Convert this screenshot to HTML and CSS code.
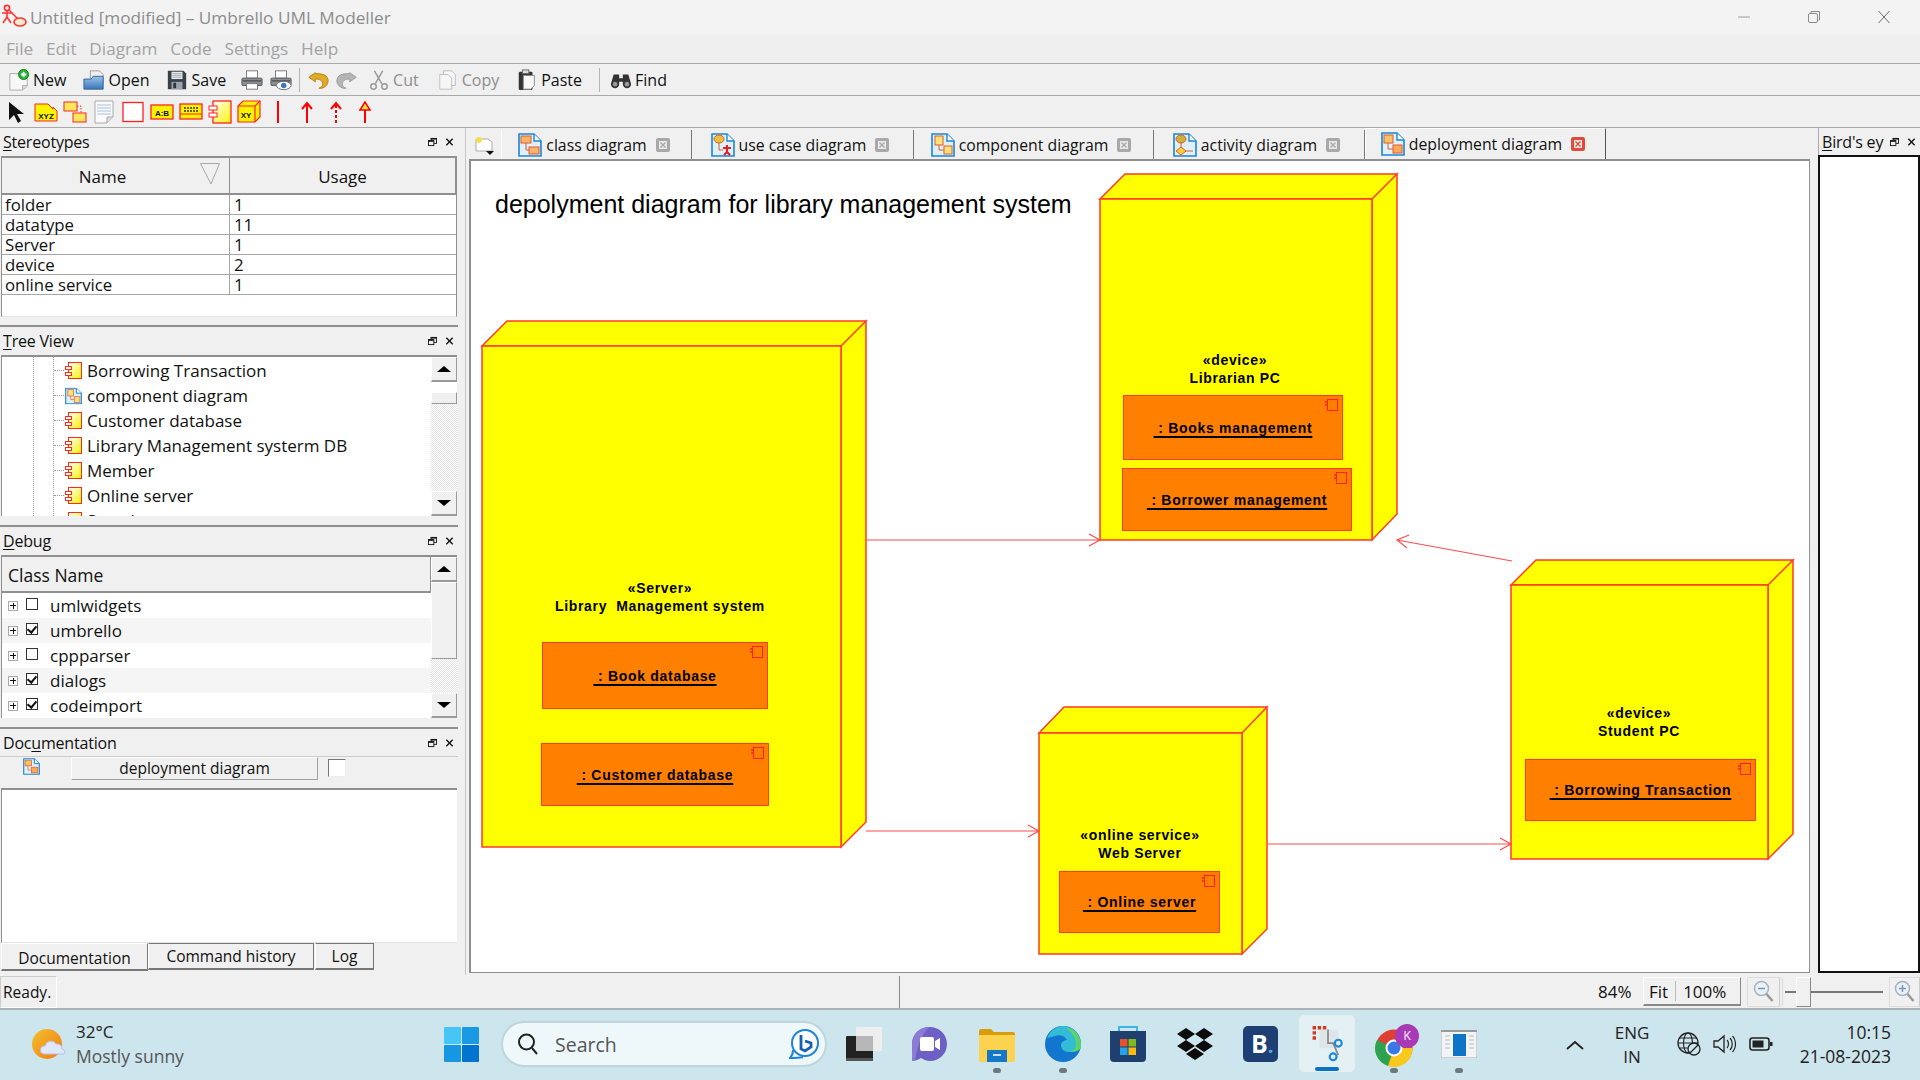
FILE: index.html
```html
<!DOCTYPE html>
<html lang="en">
<head>
<meta charset="utf-8">
<title>Untitled [modified] – Umbrello UML Modeller</title>
<link rel="stylesheet" href="styles.css">
</head>
<body>
<svg class="defs" width="0" height="0" aria-hidden="true">
  <defs>
    <linearGradient id="gy" x1="0" y1="0" x2="1" y2="1"><stop offset="0" stop-color="#ffffff"/><stop offset="1" stop-color="#fff200"/></linearGradient>
    <linearGradient id="gb" x1="0" y1="0" x2="0" y2="1"><stop offset="0" stop-color="#9cc3ea"/><stop offset="1" stop-color="#3b76b8"/></linearGradient>
    <linearGradient id="gs" x1="0" y1="0" x2="1" y2="1"><stop offset="0" stop-color="#f2c12f"/><stop offset="1" stop-color="#f47a12"/></linearGradient>
    <symbol id="i-comp" viewBox="0 0 17 18">
      <rect x="3.5" y=".5" width="13" height="16" fill="url(#gy)" stroke="#ff2a1a"/>
      <rect x=".5" y="4.5" width="6" height="3" fill="#fff" stroke="#ff2a1a"/>
      <rect x=".5" y="10.5" width="6" height="3" fill="#fff" stroke="#ff2a1a"/>
    </symbol>
    <symbol id="i-doc" viewBox="0 0 24 24">
      <path d="M1 1H16L23 8V23H1Z" fill="#dff0fb" stroke="#1b86d8" stroke-width="1.6"/>
      <path d="M16 1V8H23" fill="#fff" stroke="#1b86d8" stroke-width="1.4"/>
    </symbol>
    <symbol id="i-class" viewBox="0 0 24 24">
      <use href="#i-doc"/>
      <rect x="3" y="3" width="10" height="7" fill="#f9b36b" stroke="#e25a2a"/>
      <rect x="11" y="14" width="10" height="7" fill="#f9b36b" stroke="#e25a2a"/>
      <path d="M8 10V17H11" fill="none" stroke="#e25a2a"/>
    </symbol>
    <symbol id="i-usecase" viewBox="0 0 24 24">
      <use href="#i-doc"/>
      <ellipse cx="8" cy="6" rx="5" ry="4" fill="#e8c33d" stroke="#e25a2a"/>
      <path d="M8 10V17H12" fill="none" stroke="#e25a2a"/>
      <path d="M16 12v8M12 15h8M16 19l-3 3M16 19l3 3" stroke="#e0202a" stroke-width="2.2" fill="none"/>
    </symbol>
    <symbol id="i-compd" viewBox="0 0 24 24">
      <use href="#i-doc"/>
      <rect x="4" y="3" width="8" height="9" fill="#fce27a" stroke="#e25a2a"/>
      <rect x="13" y="13" width="8" height="8" fill="#fce27a" stroke="#e25a2a"/>
      <path d="M8 12V17H13" fill="none" stroke="#e25a2a"/>
    </symbol>
    <symbol id="i-act" viewBox="0 0 24 24">
      <use href="#i-doc"/>
      <ellipse cx="8" cy="6" rx="5" ry="4" fill="#c9b13a" stroke="#e25a2a"/>
      <path d="M8 10V16" fill="none" stroke="#e25a2a"/>
      <path d="M8 14l5 4-5 4-5-4Z" fill="#ffd23a" stroke="#e25a2a"/>
      <path d="M13 18H20" stroke="#e25a2a"/>
    </symbol>
    <symbol id="i-dep" viewBox="0 0 24 24">
      <use href="#i-doc"/>
      <rect x="3" y="3" width="9" height="8" fill="#f3c46a" stroke="#e25a2a"/>
      <rect x="12" y="13" width="9" height="8" fill="#f8a95a" stroke="#e25a2a"/>
      <path d="M7 11V17H12" fill="none" stroke="#e25a2a"/>
    </symbol>
    <symbol id="i-float" viewBox="0 0 10 10">
      <rect x="3.5" y="1" width="6" height="5.5" fill="none" stroke="#111"/><path d="M3 1.5h6.5" stroke="#111" stroke-width="1.6"/>
      <rect x=".5" y="3.5" width="6" height="5.5" fill="#f0f0f0" stroke="#111"/><path d="M0 4h6.5" stroke="#111" stroke-width="1.6"/>
    </symbol>
    <symbol id="i-close" viewBox="0 0 10 10"><path d="M1.5 1.5 8.5 8.5M8.5 1.5 1.5 8.5" stroke="#111" stroke-width="1.5"/></symbol>
    <symbol id="i-tabx" viewBox="0 0 14 14"><rect width="14" height="14" rx="2" fill="#a9a9a9"/><rect x="3" y="3" width="8" height="8" fill="#e9e9e9"/><path d="M4.5 4.5l5 5M9.5 4.5l-5 5" stroke="#a9a9a9" stroke-width="1.3"/></symbol>
    <symbol id="i-cmp" viewBox="0 0 13 13"><rect x="2.500" y=".5" width="10" height="11" fill="none" stroke="#ff2020"/><path d="M0 3h3M0 6h3" stroke="#ff2020" stroke-width="1.500"/></symbol>
  </defs>
</svg>

<div class="app">
  <header class="titlebar">
    <svg class="logo" viewBox="0 0 26 26"><circle cx="6" cy="4" r="2.6" fill="none" stroke="#f33" stroke-width="1.6"/><path d="M1 9h10M6 7v6M6 13l-4 6M6 13l4 6M8 6l8 8" stroke="#f33" stroke-width="1.6" fill="none"/><ellipse cx="19" cy="18" rx="6" ry="4" fill="#fbe9d0" stroke="#f33" stroke-width="1.6"/></svg>
    <span class="title-text">Untitled [modified] – Umbrello UML Modeller</span>
    <div class="winctl">
      <svg class="wc" viewBox="0 0 12 14"><path d="M0 7h12" stroke="#9a9a9a"/></svg>
      <svg class="wc" viewBox="0 0 12 14"><rect x=".5" y="3.500" width="9" height="9" rx="1.5" fill="none" stroke="#8a8a8a"/><path d="M3 3V1.500h8.500v8.500h-1" fill="none" stroke="#8a8a8a"/></svg>
      <svg class="wc" viewBox="0 0 12 14"><path d="M.5 1l11 12M11.5 1l-11 12" stroke="#6a6a6a"/></svg>
    </div>
  </header>

  <nav class="menubar">
    <span>File</span><span>Edit</span><span>Diagram</span><span>Code</span><span>Settings</span><span>Help</span>
  </nav>

  <div class="toolbar tb-main">
    <div class="tool wide"><svg class="ti" viewBox="0 0 24 24"><path d="M2 5h14l5 5v9l-5 4H2Z" fill="#f7f7f7" stroke="#aaa"/><path d="M16 23v-5h5" fill="#ddd" stroke="#aaa"/><circle cx="17" cy="6" r="5.5" fill="#1fb32e" stroke="#0a7a18"/><path d="M17 3v6M14 6h6" stroke="#fff" stroke-width="2"/></svg><span>New</span></div>
    <div class="tool wide"><svg class="ti" viewBox="0 0 24 24"><path d="M8 2h10l4 4v10H8Z" fill="#eee" stroke="#999"/><path d="M1 11h8l2-3h11v14H1Z" fill="url(#gb)" stroke="#2d6299"/></svg><span>Open</span></div>
    <div class="tool save"><svg class="ti" viewBox="0 0 24 24"><path d="M2 2h17l3 3v17H2Z" fill="#3a4048"/><rect x="6" y="3" width="12" height="8" fill="#e8eef4"/><path d="M7 5h10M7 7h10M7 9h10" stroke="#9aa"/><rect x="6" y="14" width="12" height="8" fill="#9aa2ab"/><rect x="8" y="15" width="3" height="6" fill="#333"/></svg><span>Save</span></div>
    <div class="tool"><svg class="ti" viewBox="0 0 24 24"><rect x="6" y="2" width="12" height="8" fill="#fff" stroke="#777"/><rect x="1" y="10" width="22" height="8" rx="1" fill="#8b8f94" stroke="#555"/><path d="M2 13h20" stroke="#333"/><rect x="6" y="16" width="12" height="6" fill="#fff" stroke="#777"/></svg></div>
    <div class="tool"><svg class="ti" viewBox="0 0 24 24"><rect x="6" y="2" width="12" height="8" fill="#fff" stroke="#777"/><rect x="1" y="10" width="22" height="8" rx="1" fill="#8b8f94" stroke="#555"/><path d="M2 13h20" stroke="#333"/><ellipse cx="15" cy="18" rx="8" ry="4.5" fill="#fff" stroke="#667"/><circle cx="15" cy="18" r="3" fill="#3b78c0"/></svg></div>
    <i class="tsep"></i>
    <div class="tool"><svg class="ti" viewBox="0 0 24 24"><path d="M9 4 2 9l7 5v-3c6 0 8 2 8 6 0 2-2 3-4 4h3c4-1 7-4 7-8 0-6-5-8-14-8Z" fill="#e0aa28" stroke="#b47f10"/></svg></div>
    <div class="tool"><svg class="ti flip" viewBox="0 0 24 24"><path d="M9 4 2 9l7 5v-3c6 0 8 2 8 6 0 2-2 3-4 4h3c4-1 7-4 7-8 0-6-5-8-14-8Z" fill="#b5b5b5" stroke="#999"/></svg></div>
    <div class="tool dim cut"><svg class="ti" viewBox="0 0 24 24"><path d="M7 2l8 14M16 2 8 16" stroke="#999" stroke-width="1.6"/><circle cx="6" cy="19" r="3" fill="none" stroke="#999" stroke-width="1.6"/><circle cx="18" cy="19" r="3" fill="none" stroke="#999" stroke-width="1.6"/></svg><span>Cut</span></div>
    <div class="tool dim wide"><svg class="ti" viewBox="0 0 24 24"><path d="M7 2h9l4 4v12H7Z" fill="#f6f6f6" stroke="#bbb"/><path d="M3 6h9l4 4v12H3Z" fill="#f6f6f6" stroke="#bbb"/></svg><span>Copy</span></div>
    <div class="tool wide"><svg class="ti" viewBox="0 0 24 24"><rect x="3" y="3" width="15" height="20" rx="1.5" fill="#333"/><rect x="7" y="1" width="7" height="4" fill="#ddd" stroke="#666"/><path d="M8 7h12v11l-4 4H8Z" fill="#f8f8f8" stroke="#888"/></svg><span>Paste</span></div>
    <i class="tsep"></i>
    <div class="tool gapl"><svg class="ti" viewBox="0 0 24 24"><path d="M4 6h6v4h4V6h6l3 10a4.500 4.500 0 0 1-9 1v-3h-4v3a4.500 4.500 0 0 1-9-1Z" fill="#333"/><circle cx="5.500" cy="16.500" r="2.500" fill="#999"/><circle cx="18.500" cy="16.500" r="2.500" fill="#999"/></svg><span>Find</span></div>
  </div>

  <div class="toolbar tb-shapes">
    <div class="cell"><svg class="si" viewBox="0 0 24 24"><path d="M4 2v18l5-5 4 8 3-2-4-7h7Z" fill="#111"/></svg></div>
    <div class="cell"><svg class="si" viewBox="0 0 24 24"><path d="M1 4h13l5 5v-2l4 4v10H1Z" fill="#fff200" stroke="#f22"/><text class="ic-t" x="12" y="19" text-anchor="middle">XYZ</text></svg></div>
    <div class="cell"><svg class="si" viewBox="0 0 24 24"><rect x="1" y="2" width="13" height="9" fill="#ffe65c" stroke="#f22"/><rect x="10" y="13" width="13" height="9" fill="#ffe65c" stroke="#f22"/><path d="M14 6h4v7" stroke="#f22" fill="none" stroke-dasharray="1.500 1.500"/></svg></div>
    <div class="cell"><svg class="si" viewBox="0 0 24 24"><path d="M3 1h18v16l-6 6H3Z" fill="#fafafa" stroke="#aaa"/><path d="M5 5h14M5 8h14M5 11h14M5 14h14" stroke="#a9bfe0"/><path d="M15 23v-6h6" fill="#ddd" stroke="#aaa"/></svg></div>
    <div class="cell"><svg class="si" viewBox="0 0 24 24"><rect x="2" y="2.500" width="20" height="19" fill="#fff" stroke="#f22" stroke-width="1.300"/></svg></div>
    <div class="cell"><svg class="si" viewBox="0 0 24 24"><rect x="1" y="5" width="22" height="14" fill="#fff200" stroke="#f22" stroke-width="1.300"/><text class="ic-t" x="12" y="15.500" text-anchor="middle">A:B</text></svg></div>
    <div class="cell"><svg class="si" viewBox="0 0 24 24"><rect x="1" y="4" width="22" height="15" fill="#fff200" stroke="#f22" stroke-width="1.300"/><path d="M1 14h22" stroke="#f22"/><path d="M5 8h14M5 11h14" stroke="#333" stroke-width="1.500" stroke-dasharray="2 1"/></svg></div>
    <div class="cell"><svg class="si" viewBox="0 0 24 24"><rect x="5" y="1" width="18" height="22" fill="url(#gy)" stroke="#f22" stroke-width="1.300"/><rect x="1" y="6" width="8" height="4" fill="#fff" stroke="#f22"/><rect x="1" y="13" width="8" height="4" fill="#fff" stroke="#f22"/></svg></div>
    <div class="cell"><svg class="si" viewBox="0 0 24 24"><path d="M1 6l5-5h17v16l-5 5H1Z" fill="#fff200" stroke="#f22" stroke-width="1.200"/><path d="M1 6h17v16M18 6l5-5" fill="none" stroke="#f22" stroke-width="1.200"/><text class="ic-t" x="9" y="18" text-anchor="middle">XY</text></svg></div>
    <div class="cell"><svg class="si" viewBox="0 0 24 24"><path d="M12 1v22" stroke="#f00" stroke-width="2"/></svg></div>
    <div class="cell"><svg class="si" viewBox="0 0 24 24"><path d="M12 23V3M7 9l5-6 5 6" stroke="#f00" stroke-width="2" fill="none"/></svg></div>
    <div class="cell"><svg class="si" viewBox="0 0 24 24"><path d="M12 23V3" stroke="#f00" stroke-width="2" stroke-dasharray="3 2"/><path d="M7 9l5-6 5 6" stroke="#f00" stroke-width="2" fill="none"/></svg></div>
    <div class="cell"><svg class="si" viewBox="0 0 24 24"><path d="M12 23V8" stroke="#f00" stroke-width="2"/><path d="M12 2 7 10h10Z" fill="#ffe14a" stroke="#f00" stroke-width="1.500"/></svg></div>
  </div>

  <main class="workspace">
    <aside class="leftdock">
      <section class="dock d-stereo">
        <div class="dock-title"><span><u>S</u>tereotypes</span><svg class="dk"><use href="#i-float"/></svg><svg class="dk"><use href="#i-close"/></svg></div>
        <div class="stereo-body">
          <div class="stereo-head"><div class="sh sh1">Name<svg class="sort" viewBox="0 0 20 22"><path d="M.5.5h19L11 21Z" fill="none" stroke="#a8a8a8"/></svg></div><div class="sh">Usage</div></div>
          <div class="srow"><span>folder</span><span>1</span></div>
          <div class="srow"><span>datatype</span><span>11</span></div>
          <div class="srow"><span>Server</span><span>1</span></div>
          <div class="srow"><span>device</span><span>2</span></div>
          <div class="srow"><span>online service</span><span>1</span></div>
        </div>
      </section>
      <section class="dock d-tree">
        <div class="dock-title"><span><u>T</u>ree View</span><svg class="dk"><use href="#i-float"/></svg><svg class="dk"><use href="#i-close"/></svg></div>
        <div class="tree-body">
          <div class="tree-list">
            <div class="trow"><svg class="tic"><use href="#i-comp"/></svg><span>Borrowing Transaction</span></div>
            <div class="trow"><svg class="tic"><use href="#i-compd"/></svg><span>component diagram</span></div>
            <div class="trow"><svg class="tic"><use href="#i-comp"/></svg><span>Customer database</span></div>
            <div class="trow"><svg class="tic"><use href="#i-comp"/></svg><span>Library Management systerm DB</span></div>
            <div class="trow"><svg class="tic"><use href="#i-comp"/></svg><span>Member</span></div>
            <div class="trow"><svg class="tic"><use href="#i-comp"/></svg><span>Online server</span></div>
            <div class="trow"><svg class="tic"><use href="#i-comp"/></svg><span>Search</span></div>
          </div>
          <div class="sbar sb-tree">
            <div class="sbtn"><i class="up"></i></div>
            <div class="sthumb t-tree"></div>
            <div class="strough"></div>
            <div class="sbtn"><i class="down"></i></div>
          </div>
        </div>
      </section>
      <section class="dock d-debug">
        <div class="dock-title"><span><u>D</u>ebug</span><svg class="dk"><use href="#i-float"/></svg><svg class="dk"><use href="#i-close"/></svg></div>
        <div class="debug-body">
          <div class="debug-list">
            <div class="dhead">Class Name</div>
            <div class="drow"><i class="exp"></i><i class="chk"></i><span>umlwidgets</span></div>
            <div class="drow alt"><i class="exp"></i><i class="chk on"></i><span>umbrello</span></div>
            <div class="drow"><i class="exp"></i><i class="chk"></i><span>cppparser</span></div>
            <div class="drow alt"><i class="exp"></i><i class="chk on"></i><span>dialogs</span></div>
            <div class="drow"><i class="exp"></i><i class="chk on"></i><span>codeimport</span></div>
          </div>
          <div class="sbar sb-debug">
            <div class="sbtn"><i class="up"></i></div>
            <div class="sthumb t-debug"></div>
            <div class="strough"></div>
            <div class="sbtn"><i class="down"></i></div>
          </div>
        </div>
      </section>
      <section class="dock d-doc">
        <div class="dock-title"><span>Doc<u>u</u>mentation</span><svg class="dk"><use href="#i-float"/></svg><svg class="dk"><use href="#i-close"/></svg></div>
        <div class="doc-row"><svg class="doc-ic"><use href="#i-dep"/></svg><div class="doc-name">deployment diagram</div><i class="doc-chk"></i></div>
        <div class="doc-area"></div>
        <div class="doc-tabs"><div class="dtab active">Documentation</div><div class="dtab t2">Command history</div><div class="dtab t3">Log</div></div>
      </section>
    </aside>

    <section class="center">
      <div class="tabbar">
        <div class="corner"><svg viewBox="0 0 22 20" class="corner-ic"><path d="M2 3h12l4 3v9H2Z" fill="#fff" stroke="#aaa"/><circle cx="5" cy="4" r="3" fill="#f6e04b"/><path d="M12 15h8l-4 4Z" fill="#111"/></svg></div>
        <div class="tab w1"><svg class="tab-ic"><use href="#i-class"/></svg><span>class diagram</span><svg class="tab-x"><use href="#i-tabx"/></svg></div>
        <div class="tab w2"><svg class="tab-ic"><use href="#i-usecase"/></svg><span>use case diagram</span><svg class="tab-x"><use href="#i-tabx"/></svg></div>
        <div class="tab w3"><svg class="tab-ic"><use href="#i-compd"/></svg><span>component diagram</span><svg class="tab-x"><use href="#i-tabx"/></svg></div>
        <div class="tab w4"><svg class="tab-ic"><use href="#i-act"/></svg><span>activity diagram</span><svg class="tab-x"><use href="#i-tabx"/></svg></div>
        <div class="tab w5 current"><svg class="tab-ic"><use href="#i-dep"/></svg><span>deployment diagram</span><svg class="tab-x red" viewBox="0 0 14 14"><rect width="14" height="14" rx="2" fill="#e04a3c"/><rect x="3" y="3" width="8" height="8" fill="#fbe6e2"/><path d="M4.500 4.500l5 5M9.500 4.500l-5 5" stroke="#e04a3c" stroke-width="1.300"/></svg></div>
      </div>
      <div class="canvas">
        <svg class="wires" viewBox="471 161 1337 809">
          <g class="box">
            <path d="M482 346 507 321H866L841 346ZM841 346 866 321V822L841 847Z"/><rect x="482" y="346" width="359" height="501"/>
            <path d="M1100 199 1125 174H1397L1372 199ZM1372 199 1397 174V514L1372 540Z"/><rect x="1100" y="199" width="272" height="341"/>
            <path d="M1039 733 1064 707H1267L1242 733ZM1242 733 1267 707V929L1242 954Z"/><rect x="1039" y="733" width="203" height="221"/>
            <path d="M1511 585 1536 560H1793L1768 585ZM1768 585 1793 560V834L1768 859Z"/><rect x="1511" y="585" width="257" height="274"/>
          </g>
          <g class="link">
            <path d="M866 540H1100M1089 534 1100 540 1089 546"/>
            <path d="M866 831H1039M1028 825 1039 831 1028 837"/>
            <path d="M1267 844H1511M1500 838 1511 844 1500 850"/>
            <path d="M1512 561 1397 540M1409 535 1397 540 1407 548"/>
          </g>
        </svg>
        <div class="diagram-title">depolyment diagram for library management system</div>

        <div class="nlabel l-server">«Server»<br>Library&nbsp; Management system</div>
        <div class="nlabel l-librarian">«device»<br>Librarian PC</div>
        <div class="nlabel l-web">«online service»<br>Web Server</div>
        <div class="nlabel l-student">«device»<br>Student PC</div>

        <div class="cmp c-book"><u> : Book database</u><svg class="cmp-ic"><use href="#i-cmp"/></svg></div>
        <div class="cmp c-cust"><u> : Customer database</u><svg class="cmp-ic"><use href="#i-cmp"/></svg></div>
        <div class="cmp c-books"><u> : Books management</u><svg class="cmp-ic"><use href="#i-cmp"/></svg></div>
        <div class="cmp c-borrower"><u> : Borrower management</u><svg class="cmp-ic"><use href="#i-cmp"/></svg></div>
        <div class="cmp c-online"><u> : Online server</u><svg class="cmp-ic"><use href="#i-cmp"/></svg></div>
        <div class="cmp c-trans"><u> : Borrowing Transaction</u><svg class="cmp-ic"><use href="#i-cmp"/></svg></div>
      </div>
    </section>

    <aside class="rightdock">
      <div class="dock-title rt"><span><u>B</u>ird's ey</span><svg class="dk"><use href="#i-float"/></svg><svg class="dk"><use href="#i-close"/></svg></div>
      <div class="birdview"></div>
    </aside>
  </main>

  <footer class="statusbar">
    <div class="st-ready">Ready.</div>
    <div class="st-msg"></div>
    <div class="st-pct">84%</div>
    <div class="st-btns"><span>Fit</span><i></i><span>100%</span></div>
    <div class="st-z zo"><svg viewBox="0 0 24 26" class="zic"><circle cx="9.500" cy="9.500" r="7" fill="#e9f1f8" stroke="#a5b2bd" stroke-width="1.500"/><path d="M6 9.500h7" stroke="#7b98b4" stroke-width="1.500"/><path d="M14.500 15l6 7" stroke="#999" stroke-width="2.500"/></svg></div>
    <div class="st-slider"><i class="st-track"></i><i class="st-thumb"></i></div>
    <div class="st-z zi"><svg viewBox="0 0 24 26" class="zic"><circle cx="9.500" cy="9.500" r="7" fill="#e9f1f8" stroke="#a5b2bd" stroke-width="1.500"/><path d="M6 9.500h7M9.500 6v7" stroke="#7b98b4" stroke-width="1.500"/><path d="M14.500 15l6 7" stroke="#999" stroke-width="2.500"/></svg></div>
  </footer>

  <div class="taskbar">
    <div class="weather">
      <svg class="w-ic" viewBox="0 0 34 32"><circle cx="15" cy="16" r="15" fill="url(#gs)"/><path d="M12 26a4 4 0 0 1 1-8 6 6 0 0 1 11-2 5 5 0 0 1 6 5 3 3 0 0 1 2 5Z" fill="#dfe8fb" stroke="#b4c3ea"/></svg>
      <div class="w-txt"><div class="w-t">32°C</div><div class="w-d">Mostly sunny</div></div>
    </div>
    <div class="task-mid">
      <svg class="start" viewBox="0 0 35 35"><rect width="17" height="17" rx="1" fill="#46c5f7"/><rect x="18" width="17" height="17" rx="1" fill="#1b9ae4"/><rect y="18" width="17" height="17" rx="1" fill="#1796e2"/><rect x="18" y="18" width="17" height="17" rx="1" fill="#0274d0"/></svg>
      <div class="searchbox">
        <svg class="s-ic" viewBox="0 0 24 24"><circle cx="10.500" cy="10" r="7.500" fill="none" stroke="#222" stroke-width="2"/><path d="M16 16l5 6" stroke="#222" stroke-width="2"/></svg>
        <span>Search</span>
        <svg class="bing" viewBox="0 0 30 32"><circle cx="16" cy="15" r="13" fill="#fff" stroke="#1f83d8" stroke-width="2"/><path d="M4 22c0 4-1 6-3 8 4 0 9 0 13-1" fill="none" stroke="#1f83d8" stroke-width="2"/><path d="M12 7v14l4 2 6-4v-4l-6-2" fill="none" stroke="#1260b8" stroke-width="2.800"/></svg>
      </div>
      <svg class="tk t-view" viewBox="0 0 36 34"><rect y="9" width="27" height="25" rx="1" fill="#222"/><rect y="31" width="27" height="3" fill="#555"/><rect x="10" width="26" height="24" rx="1" fill="#eee"/><rect x="10" y="9" width="17" height="15" fill="#b7b7b7"/></svg>
      <svg class="tk t-teams" viewBox="0 0 35 34"><path d="M17.500 0C8 0 0 7 0 17c0 6 1 12 0 17 3 0 7-2 9-3 3 2 6 3 9 3 9 0 17-7 17-17S27 0 17.500 0Z" fill="#6e5fc4"/><path d="M0 17C0 7 8 0 17.500 0 12 5 6 14 3 34H0c1-5 0-11 0-17Z" fill="#8b7bd6"/><rect x="8" y="10" width="14" height="14" rx="2" fill="#fff"/><path d="M23 14l5-3v12l-5-3Z" fill="#fff"/></svg>
      <svg class="tk t-files" viewBox="0 0 36 34"><path d="M0 3a2 2 0 0 1 2-2h10l3 3h19a2 2 0 0 1 2 2v4H0Z" fill="#d89c0c"/><path d="M0 7h36v25a2 2 0 0 1-2 2H2a2 2 0 0 1-2-2Z" fill="#fcd24f"/><rect x="8" y="22" width="20" height="12" fill="#1477c8"/><rect x="14" y="26" width="8" height="2" fill="#cde"/></svg>
      <svg class="tk t-edge" viewBox="0 0 36 36"><circle cx="18" cy="18" r="18" fill="#1276cf"/><path d="M2 12C6 3 13 0 18 0c10 0 18 8 18 20 0 5-7 6-12 6-7 0-8-5-8-7 0-3 4-5 6-5-2-4-8-6-12-4-4 1-8 2-10 2Z" fill="#32bcd8"/><path d="M20 2c10 0 16 8 16 18 0 5-7 6-12 6 6-1 7-6 7-8 0-5-5-14-11-16Z" fill="#5bd46a"/></svg>
      <svg class="tk t-store" viewBox="0 0 36 36"><path d="M9 5V1h18v4" fill="none" stroke="#36b6ea" stroke-width="2"/><path d="M0 5h36v27a4 4 0 0 1-4 4H4a4 4 0 0 1-4-4Z" fill="#1f3f6f"/><rect x="10" y="13" width="7.500" height="7.500" fill="#e8522a"/><rect x="18.500" y="13" width="7.500" height="7.500" fill="#7fb81f"/><rect x="10" y="21.500" width="7.500" height="7.500" fill="#25a5e8"/><rect x="18.500" y="21.500" width="7.500" height="7.500" fill="#fdb90f"/></svg>
      <svg class="tk t-drop" viewBox="0 0 36 34"><path d="M9 0l9 6-9 6-9-6ZM27 0l9 6-9 6-9-6ZM9 12l9 6-9 6-9-6ZM27 12l9 6-9 6-9-6ZM18 20l9 6-9 6-9-6Z" fill="#0c0c0c"/></svg>
      <div class="booking">B<em>.</em></div>
      <div class="snip">
        <svg class="snip-ic" viewBox="0 0 36 42"><rect x="8" y="4" width="22" height="22" fill="#dfe5e8"/><path d="M2 16V2h16" fill="none" stroke="#d9381e" stroke-width="4" stroke-dasharray="4 2"/><path d="M18 4v16h6l6 14" fill="none" stroke="#888" stroke-width="2"/><circle cx="30" cy="20" r="4" fill="none" stroke="#1b88d8" stroke-width="2.500"/><circle cx="24" cy="36" r="4" fill="none" stroke="#1b88d8" stroke-width="2.500"/></svg>
        <i class="active-line"></i>
      </div>
      <div class="chrome">
        <svg class="chrome-ic" viewBox="0 0 38 38"><circle cx="19" cy="19" r="18.500" fill="#dd4133"/><path d="M19 19 2 11A18.500 18.500 0 0 0 13 37Z" fill="#2ea34f"/><path d="M19 19h18.500A18.500 18.500 0 0 1 13 37Z" fill="#f8c81c"/><circle cx="19" cy="19" r="8.500" fill="#fff"/><circle cx="19" cy="19" r="6.500" fill="#3a78e8"/></svg>
        <span class="badge">K</span>
      </div>
      <svg class="tk t-app" viewBox="0 0 36 28"><rect width="36" height="28" fill="#f2f4f6" stroke="#aaa"/><rect width="36" height="2" fill="#999"/><rect x="12" y="4" width="13" height="22" fill="#0d74c8"/><path d="M4 6h5M4 10h5M4 14h5M4 18h5M28 6h5M28 10h5M28 14h5M28 18h5" stroke="#bbb"/></svg>
      <i class="rdot d1"></i><i class="rdot d2"></i><i class="rdot d3"></i><i class="rdot d4"></i>
    </div>
    <div class="tray">
      <svg class="chev" viewBox="0 0 18 10"><path d="M1 9l8-7 8 7" fill="none" stroke="#222" stroke-width="1.800"/></svg>
      <div class="lang">ENG<br>IN</div>
      <svg class="ty" viewBox="0 0 24 24"><circle cx="11" cy="11" r="10" fill="none" stroke="#222" stroke-width="1.300"/><ellipse cx="11" cy="11" rx="4.500" ry="10" fill="none" stroke="#222" stroke-width="1.100"/><path d="M1 11h20M2.500 6h17M2.500 16h10" stroke="#222"/><circle cx="17" cy="17" r="6" fill="#cde5ec" stroke="#222" stroke-width="1.300"/><path d="M13 21l8-8" stroke="#222" stroke-width="1.300"/></svg>
      <svg class="ty" viewBox="0 0 24 24"><path d="M2 9v6h4l6 5V4L6 9Z" fill="none" stroke="#222" stroke-width="1.300"/><path d="M15 8c2 2 2 6 0 8M18 6c3 3 3 9 0 12M20.500 4c4 4 4 12 0 16" fill="none" stroke="#222" stroke-width="1.200"/></svg>
      <svg class="ty bat" viewBox="0 0 24 24"><rect x="1" y="6" width="19" height="12" rx="2.500" fill="none" stroke="#222" stroke-width="1.600"/><rect x="3.500" y="8.500" width="11" height="7" fill="#222"/><rect x="21" y="10" width="2.500" height="4" fill="#222"/></svg>
      <div class="clock"><div>10:15</div><div>21-08-2023</div></div>
    </div>
  </div>
</div>
</body>
</html>
```

FILE: styles.css
```css
* { box-sizing: border-box; }
html, body { margin: 0; padding: 0; height: 100%; overflow: hidden; }
body { font-family: "Open Sans", "Noto Sans", sans-serif; font-size: 16px; color: #111; background: #f0f0f0; }
.defs { position: absolute; }
u { text-underline-offset: 2px; }
.app { width: 1920px; height: 1080px; display: flex; flex-direction: column; overflow: hidden; }

/* title + menu */
.titlebar { height: 34px; background: #f3f3f3; display: flex; align-items: center; flex: none; }
.logo { width: 26px; height: 26px; margin-left: 1px; }
.title-text { margin-left: 3px; font-size: 17.200px; color: #8c8c8c; }
.winctl { margin-left: auto; display: flex; align-items: center; gap: 58px; padding-right: 30px; }
.wc { width: 12px; height: 14px; display: block; }
.menubar { height: 30px; flex: none; background: #efefef; border-bottom: 1px solid #a8a8a8; display: flex; align-items: center; gap: 12.800px; padding: 0 0 0 6px; font-size: 17.200px; color: #a3a3a3; }

/* toolbars */
.toolbar { flex: none; height: 32px; border-bottom: 1px solid #a9a9a9; background: #f0f0f0; display: flex; align-items: center; }
.tb-main { padding-left: 8px; gap: 7px; font-size: 16px; }
.tool { display: flex; align-items: center; gap: 3px; }
.tool.wide { padding-right: 10px; }
.tool.save { padding-right: 8px; }
.tool.dim { color: #8d8d8d; }
.tool.cut { padding-right: 11px; margin-left: 3px; }
.ti { width: 22px; height: 22px; flex: none; }
.flip { transform: scaleX(-1); }
.tsep { width: 1px; height: 24px; background: #b5b5b5; flex: none; }
.gapl { margin-left: 3px; }
.tb-shapes { padding-left: 2px; }
.cell { width: 29px; display: flex; justify-content: center; }
.si { width: 24px; height: 24px; }
.ic-t { font: bold 8px "Liberation Sans", sans-serif; fill: #111; }

/* workspace */
.workspace { flex: none; height: 847px; display: flex; background: #f0f0f0; }
.leftdock { width: 466px; flex: none; display: flex; flex-direction: column; border-right: 1px solid #c6c6c6; padding-right: 7px; }
.dock { display: flex; flex-direction: column; border-bottom: 2px solid #8f8f8f; }
.d-stereo { height: 199px; }
.d-tree { height: 200px; }
.d-debug { height: 202px; padding-bottom: 8px; }
.d-doc { flex: 1; border-bottom: 0; padding-bottom: 4px; }
.dock-title { height: 27px; flex: none; display: flex; align-items: center; font-size: 16px; padding-left: 3px; letter-spacing: -.2px; }
.dock-title > span { margin-right: auto; }
.dk { width: 9px; height: 10px; margin-right: 8px; flex: none; }
.dk + .dk { margin-right: 4px; }

.stereo-body { margin: 1px 1px 8px 1px; height: 162px; background: #fff; border: 1px solid #8f8f8f; border-top-width: 2px; border-bottom: 1px solid #e4e4e4; }
.stereo-head { height: 37px; display: grid; grid-template-columns: 228px 1fr; background: #f0f0f0; border-bottom: 2px solid #8f8f8f; }
.sh { display: flex; align-items: center; justify-content: center; border-right: 1px solid #8f8f8f; position: relative; font-size: 17px; padding-top: 1px; }
.sh1 { padding-right: 26px; }
.sort { position: absolute; width: 20px; height: 22px; right: 9px; top: 5px; }
.srow { height: 20px; display: grid; grid-template-columns: 228px 1fr; border-bottom: 1px solid #a6a6a6; line-height: 19px; font-size: 16.800px; }
.srow span { padding-left: 3px; }
.srow span:first-child { border-right: 1px solid #a6a6a6; }
.srow span:last-child { padding-left: 4px; }

.tree-body { margin: 1px 1px 8px 1px; height: 161px; display: flex; background: #fff; border-left: 1px solid #8f8f8f; border-top: 2px solid #8f8f8f; overflow: hidden; }
.tree-list { flex: 1; overflow: hidden; padding-top: 1px; background:
  linear-gradient(#aaa 50%, transparent 50%) 31px 0 / 1px 2px repeat-y,
  linear-gradient(#aaa 50%, transparent 50%) 51px 0 / 1px 2px repeat-y; background-color: #fff; }
.trow { height: 25px; display: flex; align-items: center; padding-left: 63px; font-size: 17px; white-space: nowrap; position: relative; }
.trow::before { content: ""; position: absolute; left: 52px; width: 10px; top: 12px; border-top: 1px dotted #999; }
.tic { width: 17px; height: 18px; margin-right: 5px; flex: none; }
.sbar { width: 26px; flex: none; display: flex; flex-direction: column; }
.sbtn { height: 25px; flex: none; background: #f0f0f0; border: 1px solid #9a9a9a; border-top-color: #fff; border-left-color: #fff; border-bottom-width: 2px; display: flex; align-items: center; justify-content: center; }
.up { border: 6px solid transparent; border-top: 0; border-bottom: 6px solid #000; width: 0; height: 0; border-left-width: 7px; border-right-width: 7px; }
.down { border: 6px solid transparent; border-bottom: 0; border-top: 6px solid #000; width: 0; height: 0; border-left-width: 7px; border-right-width: 7px; }
.sthumb { flex: none; background: #f0f0f0; border: 1px solid #9a9a9a; border-top-color: #fff; border-left-color: #fff; }
.t-tree { height: 12px; margin-top: 10px; }
.t-debug { height: 77px; }
.strough { flex: 1; background: repeating-conic-gradient(#e4e4e4 0 25%, #fff 0 50%) 0 0 / 2px 2px; }

.debug-body { margin: 1px 1px 0 1px; height: 163px; display: flex; border-left: 1px solid #8f8f8f; border-top: 2px solid #8f8f8f; background: #fff; }
.debug-list { flex: 1; overflow: hidden; }
.dhead { height: 36px; background: #f0f0f0; border-bottom: 2px solid #8f8f8f; border-right: 1px solid #8f8f8f; display: flex; align-items: center; padding: 1px 0 0 6px; font-size: 17.500px; }
.drow { height: 25px; display: flex; align-items: center; font-size: 17px; padding-left: 6px; position: relative; }
.drow.alt { background: #f5f5f5; }
.exp { width: 10px; height: 10px; border: 1px solid #aaa; background: linear-gradient(#111,#111) center / 6px 1px no-repeat, linear-gradient(#111,#111) center / 1px 6px no-repeat, #fff; flex: none; margin-right: 8px; }
.chk { width: 12px; height: 12px; border: 1px solid #333; background: #fff; flex: none; margin: -3px 12px 0 0; position: relative; }
.chk.on::after { content: ""; position: absolute; left: 2px; top: 0; width: 4px; height: 7px; border: solid #111; border-width: 0 2px 2px 0; transform: rotate(40deg); }

.doc-row { height: 25px; flex: none; display: flex; align-items: flex-start; padding-left: 23px; border-top: 1px solid #ccc; }
.doc-ic { width: 17px; height: 17px; margin: 1px 31px 0 0; flex: none; }
.doc-name { width: 247px; height: 23px; background: #f0f0f0; border: 1px solid #fff; border-bottom: 1px solid #a0a0a0; border-right: 1px solid #a0a0a0; text-align: center; line-height: 21px; font-size: 15.500px; }
.doc-chk { width: 18px; height: 18px; margin: 2px 0 0 10px; border: 1px solid #777; border-right-color: #eee; border-bottom-color: #eee; background: #fff; }
.doc-area { margin: 7px 1px 0 1px; flex: 1; background: #fff; border-top: 2px solid #8f8f8f; border-left: 1px solid #8f8f8f; border-bottom: 1px solid #e4e4e4; }
.doc-tabs { height: 28px; flex: none; display: flex; font-size: 15.500px; padding-left: 1px; }
.dtab { height: 27px; border: 1px solid #777; border-bottom-width: 2px; border-left-color: #fff; border-top-color: #777; display: flex; align-items: center; justify-content: center; }
.dtab.active { width: 147px; height: 28px; padding-top: 3px; border-top-color: #fff; }
.dtab.t2 { width: 166px; }
.dtab.t3 { width: 59px; margin-left: 1px; }

/* center */
.center { flex: none; width: 1352px; display: flex; flex-direction: column; padding-left: 3px; padding-right: 8px; }
.tabbar { height: 31px; flex: none; display: flex; align-items: stretch; padding-top: 2px; font-size: 15.800px; }
.corner { width: 32px; display: flex; align-items: center; justify-content: center; padding-top: 2px; }
.corner-ic { width: 22px; height: 20px; }
.tab { display: flex; align-items: center; justify-content: center; gap: 4px; border-right: 1px solid #777; padding-right: 5px; }
.tab span { white-space: nowrap; margin-right: 5px; }
.w1 { width: 191px; border-left: 1px solid #fff; }
.w2 { width: 222px; }
.w3 { width: 240px; }
.w4 { width: 211px; }
.w5 { width: 241px; }
.current { margin-top: -2px; background: #f0f0f0; border-left: 1px solid #fff; border-top: 1px solid #fff; border-right: 1px solid #555; }
.tab-ic { width: 24px; height: 24px; flex: none; }
.tab-x { width: 14px; height: 14px; flex: none; }

.canvas { position: relative; flex: 1; background: #fff; margin-bottom: 2px; border: 1px solid #8f8f8f; border-top-width: 2px; border-left-width: 2px; overflow: hidden; }
.wires { position: absolute; left: 0; top: 0; width: 1337px; height: 809px; }
.box path, .box rect { fill: #ffff00; stroke: #ff3a2a; stroke-width: 1.500; }
.link path { fill: none; stroke: #ff4d4d; stroke-width: 1.200; }
.diagram-title { position: absolute; left: 24px; top: 29px; font: 25px/28px "Liberation Sans", sans-serif; color: #000; white-space: nowrap; }
.nlabel { position: absolute; width: 300px; text-align: center; font: bold 14px/18px "Liberation Sans", sans-serif; letter-spacing: .65px; color: #000; white-space: nowrap; }
.l-server { left: 39px; top: 418px; }
.l-librarian { left: 614px; top: 190px; }
.l-web { left: 519px; top: 665px; }
.l-student { left: 1018px; top: 543px; }
.cmp { position: absolute; background: #ff7f00; border: 1.500px solid #ff3a1a; display: flex; align-items: center; justify-content: center; font: bold 14px "Liberation Sans", sans-serif; letter-spacing: .7px; color: #000; white-space: pre; }
.cmp u { text-underline-offset: 3px; text-decoration-thickness: 1.500px; }
.cmp-ic { position: absolute; right: 4px; top: 3px; width: 13px; height: 13px; }
.c-book { left: 71px; top: 481px; width: 226px; height: 67px; }
.c-cust { left: 70px; top: 582px; width: 228px; height: 63px; }
.c-books { left: 652px; top: 234px; width: 220px; height: 65px; }
.c-borrower { left: 651px; top: 307px; width: 230px; height: 63px; }
.c-online { left: 588px; top: 710px; width: 161px; height: 62px; }
.c-trans { left: 1054px; top: 598px; width: 231px; height: 62px; }

/* right dock */
.rightdock { flex: 1; display: flex; flex-direction: column; min-width: 0; }
.rt { padding-left: 3px; border-left: 1px solid #aaa; overflow: hidden; }
.birdview { flex: none; height: 818px; background: #fff; border: 2px solid #111; }

/* status */
.statusbar { flex: none; height: 33px; background: #f0f0f0; display: flex; align-items: center; font-size: 15.500px; }
.statusbar > * { flex: none; }
.st-ready { width: 57px; height: 32px; line-height: 30px; padding-left: 2px; border: 1px solid #fff; border-left-color: #ccc; border-top-color: #ccc; }
.st-msg { width: 843px; height: 32px; border-right: 1px solid #888; margin-right: 698px; }
.st-pct { width: 45px; font-size: 17px; }
.st-btns { width: 98px; height: 29px; display: flex; align-items: center; justify-content: flex-start; gap: 7px; padding-left: 5px; border: 1px solid #fff; border-right-color: #888; border-bottom: 2px solid #888; font-size: 17px; }
.st-btns i { width: 1px; height: 20px; background: #bbb; }
.st-z { height: 30px; border: 1px solid #ddd; border-right-color: #ccc; display: flex; align-items: center; justify-content: center; }
.zo { width: 33px; margin-left: 6px; }
.zi { width: 31px; margin-left: 4px; }
.zic { width: 24px; height: 26px; }
.st-slider { width: 103px; height: 30px; margin-left: 2px; position: relative; border-left: 1px solid #ddd; }
.st-track { position: absolute; left: 2px; right: 2px; top: 14px; height: 2px; background: #777; }
.st-thumb { position: absolute; left: 13px; top: 0; width: 15px; height: 30px; background: #f0f0f0; border: 1px solid #fff; border-right-color: #888; border-bottom: 1px solid #888; }

/* taskbar */
.taskbar { flex: none; height: 72px; background: #cde5ec; border-top: 2px solid #a8b4b8; display: flex; position: relative; }
.weather { position: absolute; left: 32px; top: -1px; height: 70px; display: flex; align-items: center; gap: 10px; }
.w-ic { width: 34px; height: 32px; }
.w-t { font-size: 17px; line-height: 24px; color: #222; }
.w-d { font-size: 17.500px; line-height: 24px; color: #555; }
.task-mid { position: absolute; left: 0; top: 0; width: 100%; height: 70px; }
.start { position: absolute; left: 444px; top: 17px; width: 35px; height: 35px; }
.searchbox { position: absolute; left: 501px; top: 11px; width: 326px; height: 46px; background: #eef8fa; border-radius: 23px; border: 2px solid #bdd5dc; display: flex; align-items: center; padding-left: 13px; color: #555; font-size: 19.500px; }
.s-ic { width: 24px; height: 24px; margin-right: 15px; }
.bing { position: absolute; right: 6px; top: 5px; width: 30px; height: 32px; }
.tk { position: absolute; }
.t-view { left: 846px; top: 17px; width: 36px; height: 34px; }
.t-teams { left: 912px; top: 17px; width: 35px; height: 34px; }
.t-files { left: 979px; top: 18px; width: 36px; height: 34px; }
.t-edge { left: 1045px; top: 16px; width: 36px; height: 36px; }
.t-store { left: 1110px; top: 16px; width: 36px; height: 36px; }
.t-drop { left: 1177px; top: 18px; width: 36px; height: 34px; }
.booking { position: absolute; left: 1243px; top: 16px; width: 35px; height: 36px; border-radius: 5px; background: #1d3f73; color: #fff; font: bold 25px/34px "Open Sans", sans-serif; padding-left: 8px; }
.booking em { color: #4aaef0; font-style: normal; font-size: 20px; }
.snip { position: absolute; left: 1299px; top: 5px; width: 56px; height: 57px; border-radius: 5px; background: #e3f1f5; }
.snip-ic { position: absolute; left: 11px; top: 11px; width: 36px; height: 36px; }
.active-line { position: absolute; left: 16px; bottom: 1px; width: 24px; height: 4px; border-radius: 2px; background: #0b72c6; }
.chrome { position: absolute; left: 1375px; top: 15px; width: 46px; height: 46px; }
.chrome-ic { position: absolute; left: 0; top: 4px; width: 38px; height: 38px; }
.badge { position: absolute; left: 20px; top: -1px; width: 24px; height: 24px; border-radius: 50%; background: #a83ab5; color: #e8c8ee; font: 600 12px/24px "Open Sans", sans-serif; text-align: center; }
.t-app { left: 1441px; top: 20px; width: 36px; height: 28px; }
.rdot { position: absolute; top: 58px; width: 8px; height: 5px; border-radius: 3px; background: #6c7a80; }
.d1 { left: 993px; } .d2 { left: 1059px; } .d3 { left: 1390px; } .d4 { left: 1455px; }
.tray { position: absolute; right: 0; top: 0; height: 70px; width: 380px; color: #222; font-size: 17px; }
.chev { position: absolute; left: 26px; top: 30px; width: 18px; height: 10px; }
.lang { position: absolute; left: 62px; top: 11px; width: 60px; text-align: center; line-height: 24px; }
.ty { position: absolute; top: 22px; width: 24px; height: 24px; }
.ty:nth-of-type(2) { left: 137px; }
.ty:nth-of-type(3) { left: 172px; }
.bat { left: 209px; }
.clock { position: absolute; right: 29px; top: 10px; text-align: right; line-height: 24px; font-size: 17.500px; }
```
